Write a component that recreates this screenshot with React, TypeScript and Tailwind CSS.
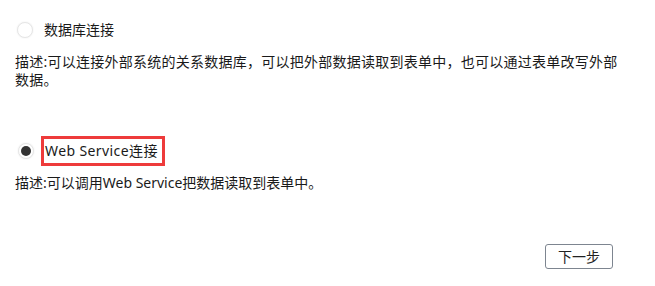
import { useState } from "react";

const options = [
  {
    key: "db",
    label: "数据库连接",
    desc: "描述:可以连接外部系统的关系数据库，可以把外部数据读取到表单中，也可以通过表单改写外部数据。",
  },
  {
    key: "ws",
    label: "Web Service连接",
    desc: "描述:可以调用Web Service把数据读取到表单中。",
  },
];

function Radio({ checked }: { checked: boolean }) {
  return (
    <span className="flex h-[16px] w-[16px] shrink-0 items-center justify-center rounded-full border border-[#e6e6e6] bg-white shadow-[0_0_2px_rgba(0,0,0,0.08)]">
      {checked && <span className="h-[10px] w-[10px] rounded-full bg-[#333]" />}
    </span>
  );
}

export default function App() {
  const [selected, setSelected] = useState("ws");

  return (
    <div
      className="flex h-[286px] w-[655px] flex-col bg-white pl-[15px] pt-[20px] text-[14px] text-[#1a1a1a]"
      style={{ fontFamily: '"Noto Sans", "Noto Sans CJK SC", sans-serif' }}
    >
      {/* first option */}
      <div
        className="ml-[2px] flex h-[20px] cursor-pointer items-center gap-[11px]"
        onClick={() => setSelected("db")}
      >
        <Radio checked={selected === "db"} />
        <span className="leading-[20px]">{options[0].label}</span>
      </div>
      <p className="mt-[13px] w-[615px] leading-[18px] tracking-[0.25px]">{options[0].desc}</p>

      {/* second option, highlighted */}
      <div
        className="ml-[3px] mt-[47px] flex h-[30px] cursor-pointer items-center gap-[7px]"
        onClick={() => setSelected("ws")}
      >
        <Radio checked={selected === "ws"} />
        <span className="flex h-[30px] w-[124px] items-center border-[3px] border-[#ee3b3b] pl-[1px] leading-[20px] tracking-[0.4px]">
          {options[1].label}
        </span>
      </div>
      <p className="mt-[8px] leading-[18px]">{options[1].desc}</p>

      <div className="mt-[52px] flex justify-end pr-[42px]">
        <button className="h-[25px] w-[68px] rounded-[3px] border border-[#7d8590] bg-white text-[14px] leading-[23px] text-[#222]">
          下一步
        </button>
      </div>
    </div>
  );
}
